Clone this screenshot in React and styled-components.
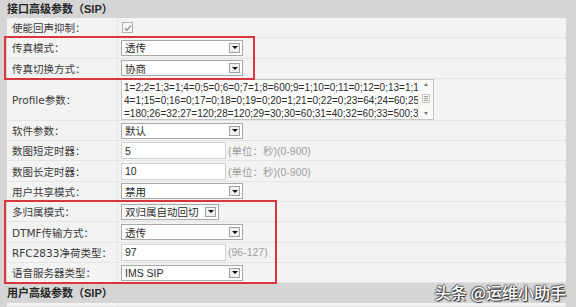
import styled, { createGlobalStyle } from 'styled-components';

const GlobalStyle = createGlobalStyle`
  html, body {
    margin: 0;
    padding: 0;
    background: #d5d5d5;
  }
  body {
    width: 576px;
    height: 307px;
    overflow: hidden;
    font-family: "Liberation Sans", "Noto Sans CJK SC", sans-serif;
    color: #333;
  }
`;

const Page = styled.div`
  position: relative;
  height: 307px;
  overflow: hidden;
  padding: 0 10px 0 7px;
`;

const SectionTitle = styled.div`
  height: ${(p) => p.$h || 18}px;
  line-height: ${(p) => p.$h || 18}px;
  font-size: 11px;
  font-weight: bold;
  color: #262626;
  white-space: nowrap;
`;

const Table = styled.div`
  display: flex;
  flex-direction: column;
  background: #f3f3f3;
`;

const Group = styled.div`
  position: relative;
  display: flex;
  flex-direction: column;

  &::after {
    content: "";
    position: absolute;
    top: -2px;
    left: -3px;
    bottom: -1px;
    width: ${(p) => p.$boxWidth}px;
    border: 2px solid #d8353d;
    box-sizing: border-box;
    pointer-events: none;
  }
`;

const Row = styled.div`
  display: grid;
  grid-template-columns: 111px 1fr;
  height: ${(p) => p.$h || 20.3}px;
  box-sizing: border-box;
  border-bottom: 1px solid #e4e4e4;
`;

const Label = styled.div`
  display: flex;
  align-items: center;
  padding-left: 5px;
  border-right: 1px solid #e6e6e6;
  font-family: "DejaVu Sans", "Noto Sans CJK SC", sans-serif;
  font-size: 10.5px;
  color: #3a3a3a;
  white-space: nowrap;
`;

const Value = styled.div`
  display: flex;
  align-items: center;
  gap: 2px;
  padding-left: 3px;
  font-size: 10.5px;
`;

const SelectBox = styled.div`
  width: ${(p) => p.$w}px;
  height: 16px;
  box-sizing: border-box;
  border: 1px solid #a8a8a8;
  background: #fff;
  display: flex;
  align-items: center;
  justify-content: space-between;
  padding: 0 2px 0 3px;
  color: #2a2a2a;
  white-space: nowrap;
`;

const Arrow = styled.span`
  width: 11px;
  height: 10px;
  box-sizing: border-box;
  border: 1px solid #a0a0a0;
  background: #f0f0f0;
  display: flex;
  align-items: center;
  justify-content: center;

  &::after {
    content: "";
    border-left: 3px solid transparent;
    border-right: 3px solid transparent;
    border-top: 3px solid #111;
  }
`;

const InputBox = styled.div`
  width: 105px;
  height: 17px;
  box-sizing: border-box;
  border: 1px solid #d2d2d2;
  background: #fff;
  display: flex;
  align-items: center;
  padding-left: 3px;
  color: #2a2a2a;
`;

const Note = styled.span`
  color: #a0a0a0;
  font-size: 10.5px;
  white-space: nowrap;
`;

const Check = styled.div`
  width: 11px;
  height: 11px;
  box-sizing: border-box;
  border: 1px solid #b0b0b0;
  background: #f7f7f7;
  margin-left: 1px;
  display: flex;
  align-items: center;
  justify-content: center;
`;

const TextBox = styled.div`
  width: 313px;
  height: 41px;
  box-sizing: border-box;
  border: 1px solid #c4c4c4;
  background: #fff;
  display: flex;
`;

const TextLines = styled.div`
  flex: 1;
  padding: 1px 2px;
  font-size: 10px;
  line-height: 13px;
  white-space: pre;
  overflow: hidden;
  color: #2a2a2a;
`;

const Scroll = styled.div`
  width: 14px;
  display: flex;
  flex-direction: column;
  align-items: center;
  justify-content: space-between;
  padding: 3px 0 4px;
  background: #fafafa;
  border-left: 1px solid #f0f0f0;
`;

const Thumb = styled.div`
  width: 8px;
  height: 9px;
  box-sizing: border-box;
  border: 1px solid #c8c8c8;
  display: flex;
  flex-direction: column;
  justify-content: center;
  gap: 1px;
  padding: 0 1px;

  span {
    height: 1px;
    background: #999;
  }
`;

const Tri = styled.span`
  border-left: 2px solid transparent;
  border-right: 2px solid transparent;
  ${(p) => (p.$up ? 'border-bottom' : 'border-top')}: 3px solid #777;
`;

const Watermark = styled.div`
  position: absolute;
  right: 10px;
  top: 280px;
  font-family: "Noto Sans CJK SC", sans-serif;
  font-size: 16px;
  font-weight: 500;
  color: #fff;
  white-space: nowrap;
  text-shadow: 1px 1px 1px #222, -1px 0 1px #555, 0 -1px 1px #555;
`;

function Select({ w = 122, children }) {
  return (
    <SelectBox $w={w}>
      <span>{children}</span>
      <Arrow />
    </SelectBox>
  );
}

const profile = [
  '1=2;2=1;3=1;4=0;5=0;6=0;7=1;8=600;9=1;10=0;11=0;12=0;13=1;1',
  '4=1;15=0;16=0;17=0;18=0;19=0;20=1;21=0;22=0;23=64;24=60;25',
  '=180;26=32;27=120;28=120;29=30;30=60;31=40;32=60;33=500;3',
];

export default function App() {
  return (
    <Page>
      <GlobalStyle />
      <SectionTitle>接口高级参数（SIP）</SectionTitle>
      <Table>
        <Row>
          <Label>使能回声抑制：</Label>
          <Value>
            <Check>
              <svg width="8" height="8" viewBox="0 0 8 8">
                <path d="M1 4.2 L3 6.3 L7 1.3" fill="none" stroke="#8a8a8a" strokeWidth="1.3" />
              </svg>
            </Check>
          </Value>
        </Row>
        <Group $boxWidth={251}>
          <Row>
            <Label>传真模式：</Label>
            <Value><Select>透传</Select></Value>
          </Row>
          <Row>
            <Label>传真切换方式：</Label>
            <Value><Select>协商</Select></Value>
          </Row>
        </Group>
        <Row $h={42}>
          <Label>Profile参数：</Label>
          <Value>
            <TextBox>
              <TextLines>{profile.join('\n')}</TextLines>
              <Scroll>
                <Tri $up />
                <Thumb><span /><span /><span /></Thumb>
                <Tri />
              </Scroll>
            </TextBox>
          </Value>
        </Row>
        <Row>
          <Label>软件参数：</Label>
          <Value><Select>默认</Select></Value>
        </Row>
        <Row>
          <Label>数图短定时器：</Label>
          <Value>
            <InputBox>5</InputBox>
            <Note>(单位：秒)(0-900)</Note>
          </Value>
        </Row>
        <Row>
          <Label>数图长定时器：</Label>
          <Value>
            <InputBox>10</InputBox>
            <Note>(单位：秒)(0-900)</Note>
          </Value>
        </Row>
        <Row>
          <Label>用户共享模式：</Label>
          <Value><Select>禁用</Select></Value>
        </Row>
        <Group $boxWidth={273}>
          <Row>
            <Label>多归属模式：</Label>
            <Value><Select w={98}>双归属自动回切</Select></Value>
          </Row>
          <Row>
            <Label>DTMF传输方式：</Label>
            <Value><Select>透传</Select></Value>
          </Row>
          <Row>
            <Label>RFC2833净荷类型：</Label>
            <Value>
              <InputBox>97</InputBox>
              <Note>(96-127)</Note>
            </Value>
          </Row>
          <Row>
            <Label>语音服务器类型：</Label>
            <Value><Select>IMS SIP</Select></Value>
          </Row>
        </Group>
      </Table>
      <SectionTitle $h={20}>用户高级参数（SIP）</SectionTitle>
      <Table>
        <Row $h={4}>
          <Label />
          <Value />
        </Row>
      </Table>
      <Watermark>头条 @运维小助手</Watermark>
    </Page>
  );
}
